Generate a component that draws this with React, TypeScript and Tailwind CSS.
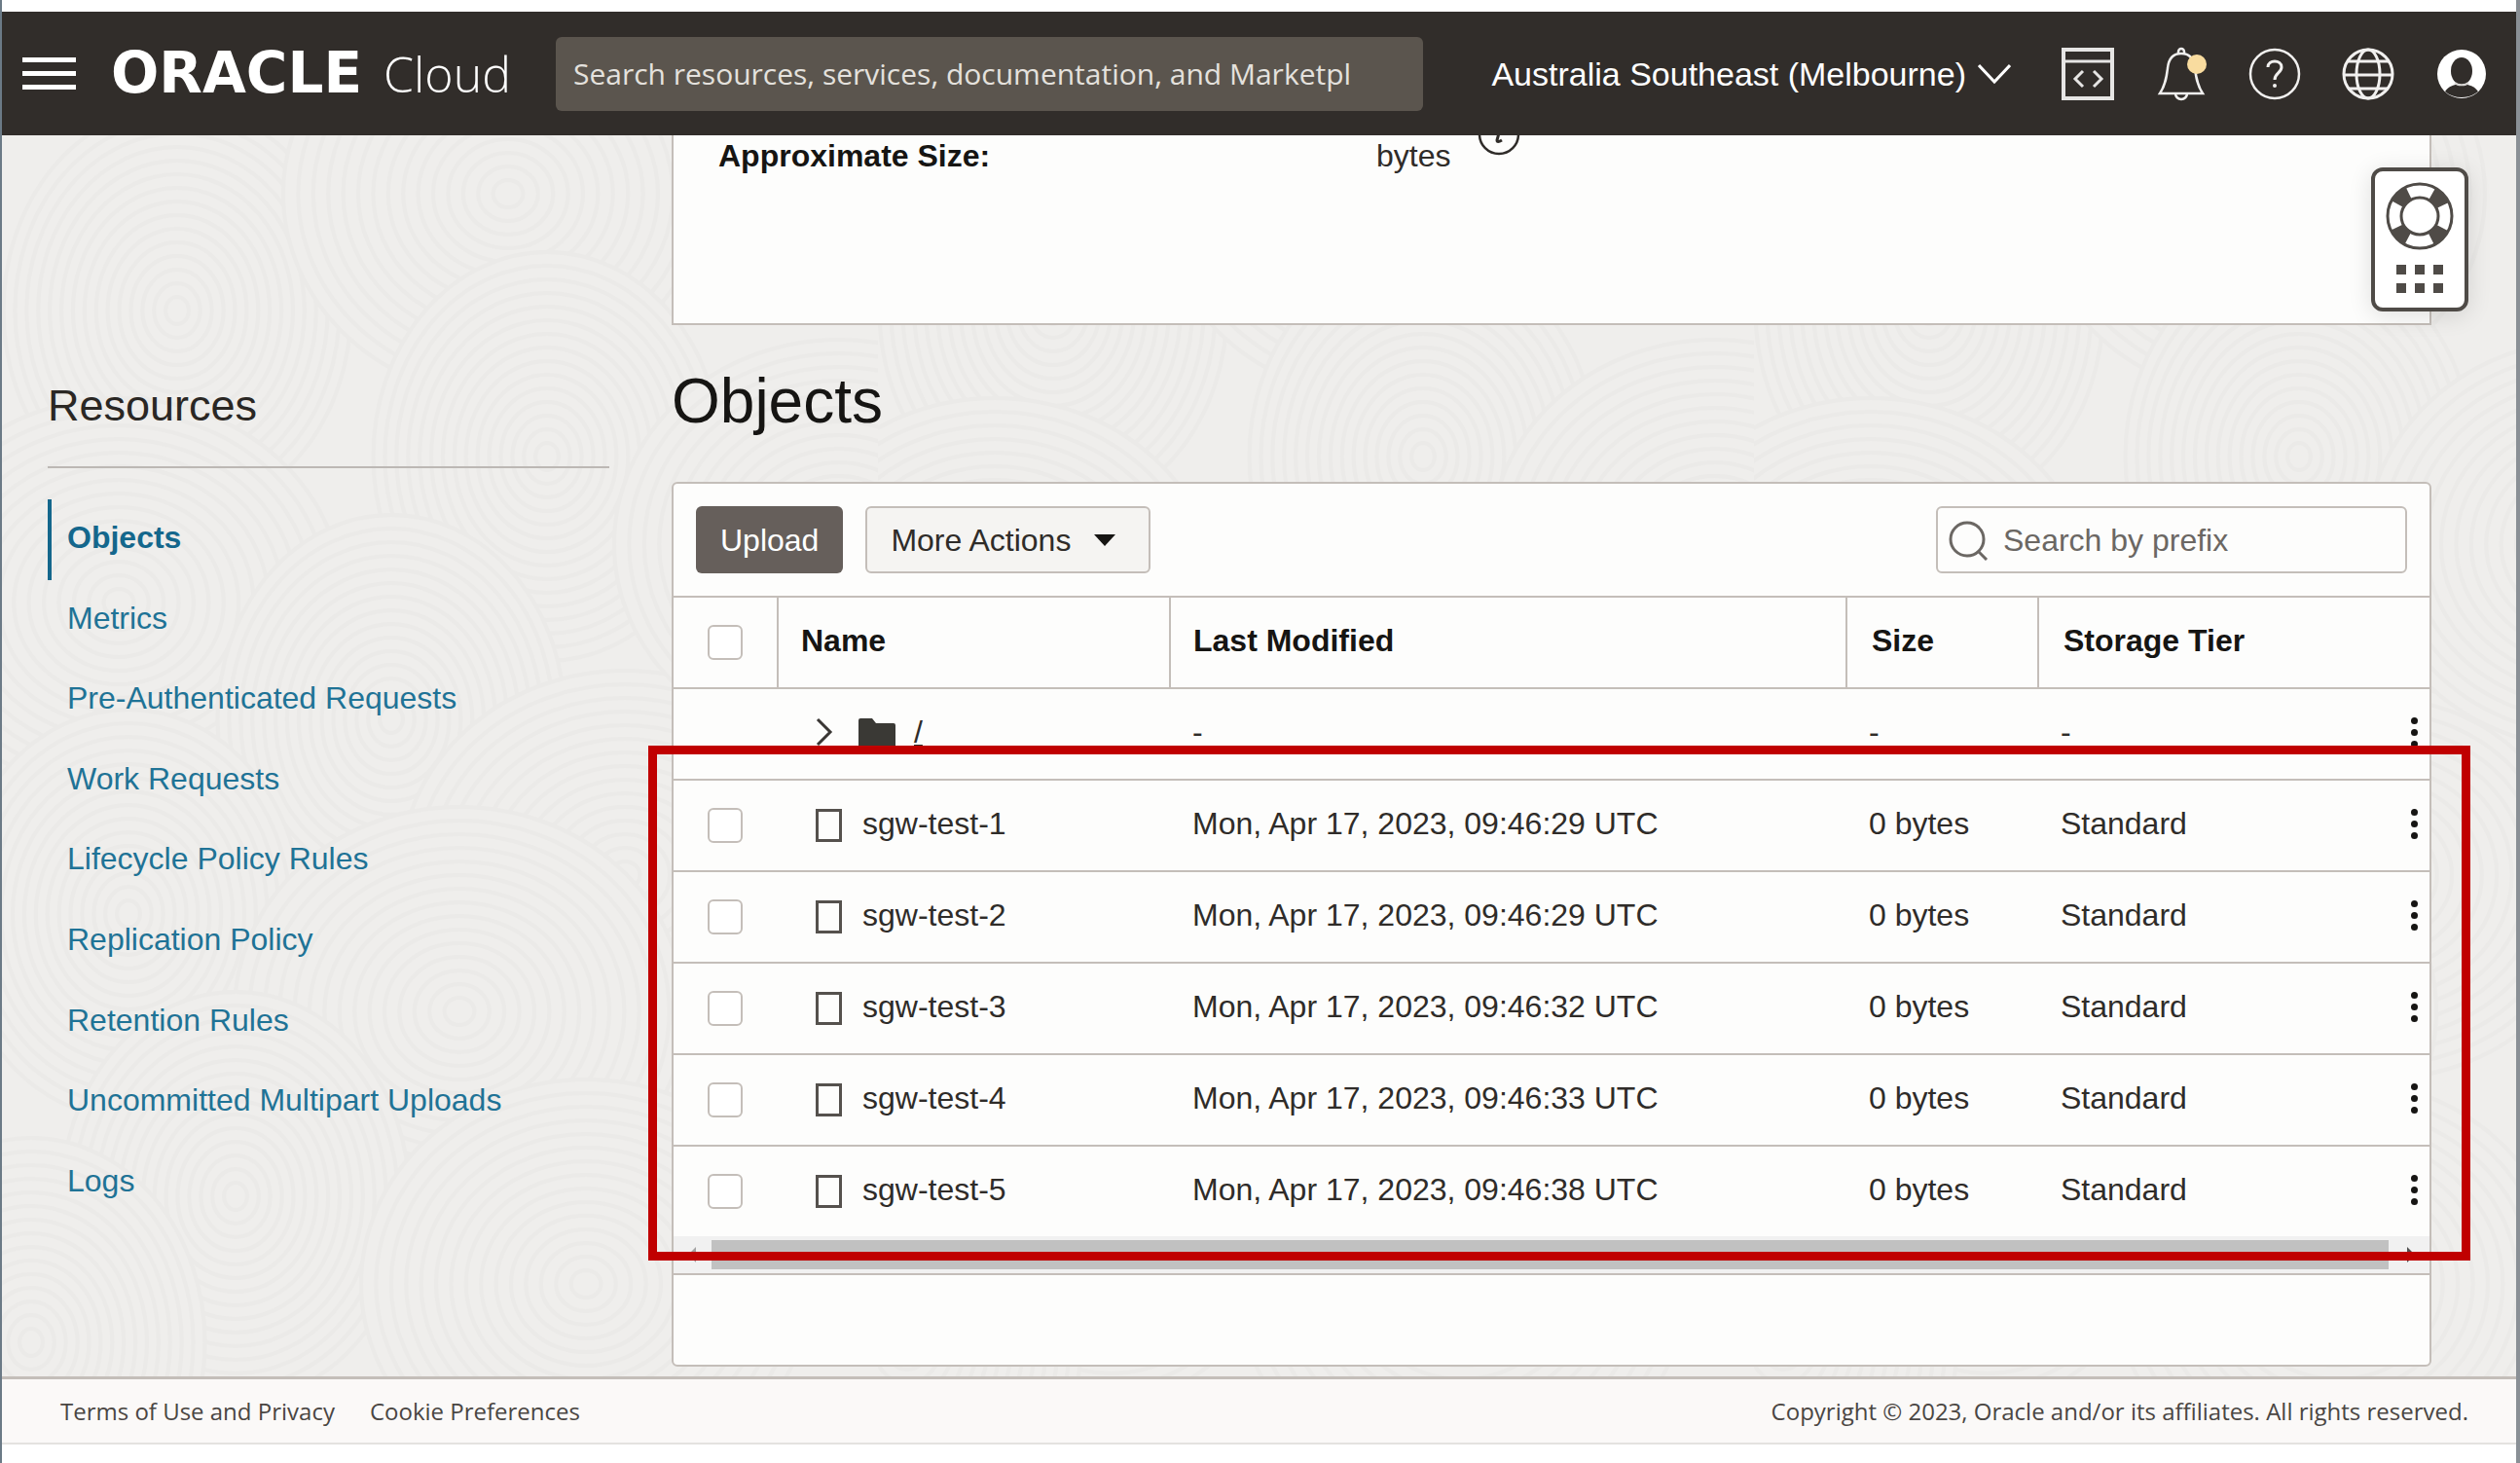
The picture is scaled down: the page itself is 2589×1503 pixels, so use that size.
import React from "react";

const resources = [
  "Objects",
  "Metrics",
  "Pre-Authenticated Requests",
  "Work Requests",
  "Lifecycle Policy Rules",
  "Replication Policy",
  "Retention Rules",
  "Uncommitted Multipart Uploads",
  "Logs",
];

const objects = [
  { name: "sgw-test-1", modified: "Mon, Apr 17, 2023, 09:46:29 UTC" },
  { name: "sgw-test-2", modified: "Mon, Apr 17, 2023, 09:46:29 UTC" },
  { name: "sgw-test-3", modified: "Mon, Apr 17, 2023, 09:46:32 UTC" },
  { name: "sgw-test-4", modified: "Mon, Apr 17, 2023, 09:46:33 UTC" },
  { name: "sgw-test-5", modified: "Mon, Apr 17, 2023, 09:46:38 UTC" },
];

const rippleCentres = [
  [180, 180], [520, 60], [560, 330], [120, 480], [400, 600], [640, 760],
  [130, 800], [470, 900], [240, 1090], [600, 1180], [30, 1240], [860, 420],
];
const rippleRadii = [210, 196, 182, 168, 154, 140, 126, 112, 98, 84, 70, 56, 42, 28, 14];

/* Faint overlapping tree-ring texture behind the page. */
function Ripples() {
  return (
    <svg className="absolute inset-0 h-full w-full" aria-hidden="true">
      <defs>
        <pattern id="ripples" width="900" height="1300" patternUnits="userSpaceOnUse">
          <rect width="900" height="1300" fill="#efeeec" />
          {rippleCentres.map(([x, y], i) => (
            <g key={i} fill="#efeeec" stroke="#ebeae8" strokeWidth="4">
              {rippleRadii.map((r) => (
                <ellipse key={r} cx={x} cy={y} rx={r * (i % 2 ? 1.1 : 0.85)} ry={r} />
              ))}
            </g>
          ))}
        </pattern>
      </defs>
      <rect width="100%" height="100%" fill="url(#ripples)" />
    </svg>
  );
}

function IconButton({ label, children }: { label: string; children: React.ReactNode }) {
  return (
    <button type="button" aria-label={label} className="flex size-14 shrink-0 items-center justify-center">
      {children}
    </button>
  );
}

function Header() {
  return (
    <header className="flex h-[127px] items-center bg-[#312d2a] pr-[28px] pl-[21px] text-white">
      <button type="button" aria-label="Open navigation menu" className="flex w-[55px] shrink-0 flex-col gap-[9px]">
        <span className="h-[5px] bg-white" />
        <span className="h-[5px] bg-white" />
        <span className="h-[5px] bg-white" />
      </button>
      <a href="#home" className="ml-[36px] flex shrink-0 items-baseline gap-[22px] leading-[60px]">
        <span className="font-['DejaVu_Sans'] text-[58px] font-bold">ORACLE</span>
        <span className="font-['Open_Sans'] text-[50px] font-light">Cloud</span>
      </a>
      <input
        type="text"
        aria-label="Search"
        placeholder="Search resources, services, documentation, and Marketpl"
        className="ml-[46px] h-[76px] min-w-0 flex-1 rounded-[6px] bg-[#5b554e] px-[18px] font-['Open_Sans'] text-[30px] text-white outline-none placeholder:text-[#e4e1dd]"
      />
      <button type="button" className="ml-[70px] flex shrink-0 items-center gap-[12px] font-['Liberation_Sans'] text-[34px]">
        Australia Southeast (Melbourne)
        <svg width="34" height="24" viewBox="0 0 34 24" fill="none" stroke="white" strokeWidth="3">
          <path d="M1 3 L17 20 L33 3" />
        </svg>
      </button>
      <div className="ml-[51px] flex shrink-0 gap-[40px]">
        <IconButton label="Developer tools">
          <svg width="54" height="54" viewBox="0 0 54 54" fill="none" stroke="#e6e5e4" strokeWidth="3">
            <rect x="2" y="2" width="50" height="50" strokeWidth="4" />
            <path d="M2 14H52M22 24L14 32L22 40M33 24L41 32L33 40" />
          </svg>
        </IconButton>
        <IconButton label="Announcements">
          <svg width="54" height="56" viewBox="0 0 54 56" fill="none" stroke="#f1f0ef" strokeWidth="2.5">
            <path d="M24 7V5A3 3 0 0 1 30 5V7" />
            <path d="M5 48C11 39 12 30 13 22C14 12 18 7 27 7C36 7 40 12 41 22C42 30 43 39 49 48Z" />
            <path d="M21 48A6 6 0 0 0 33 48" />
            <circle cx="43" cy="18" r="10" fill="#f9dc9f" stroke="none" />
          </svg>
        </IconButton>
        <IconButton label="Help">
          <svg width="54" height="54" viewBox="0 0 54 54" fill="none" stroke="#f1f0ef" strokeWidth="2.5">
            <circle cx="27" cy="27" r="25" />
            <path d="M20 20C20 12 34 12 34 20C34 26 27 26 27 33" strokeWidth="3" />
            <circle cx="27" cy="39" r="2" fill="#f1f0ef" stroke="none" />
          </svg>
        </IconButton>
        <IconButton label="Language">
          <svg width="54" height="54" viewBox="0 0 54 54" fill="none" stroke="#f1f0ef" strokeWidth="3">
            <circle cx="27" cy="27" r="25" />
            <ellipse cx="27" cy="27" rx="12" ry="25" />
            <path d="M2 28H52M6 14H48M6 42H48" />
          </svg>
        </IconButton>
        <IconButton label="Profile">
          <svg width="52" height="52" viewBox="0 0 52 52">
            <circle cx="26" cy="26" r="25" fill="white" />
            <ellipse cx="26" cy="23" rx="11" ry="14" fill="#312d2a" />
            <path d="M9 44C13 38 18 38 22 36H30C34 38 39 38 43 44C34 52 18 52 9 44Z" fill="#312d2a" />
            <path d="M19 35C22 38 30 38 33 35" fill="none" stroke="#d8d6d4" strokeWidth="2" />
          </svg>
        </IconButton>
      </div>
    </header>
  );
}

function Sidebar() {
  return (
    <aside className="w-[577px] shrink-0 pt-[254px]">
      <h2 className="border-b-2 border-[#bcb8b4] pb-[38px] text-[45px] leading-[48px] text-[#2a2724]">Resources</h2>
      <nav aria-label="Resources" className="mt-8 grid h-[743px] grid-rows-9">
        {resources.map((item, i) => (
          <a
            key={item}
            href="#resource"
            className={
              i === 0
                ? "flex items-center border-l-4 border-[#14678c] pb-1 pl-[16px] font-bold text-[#14678c]"
                : "flex items-center pb-1 pl-[20px] text-[#1f7396]"
            }
          >
            {item}
          </a>
        ))}
      </nav>
    </aside>
  );
}

function Check({ label }: { label: string }) {
  return (
    <input
      type="checkbox"
      aria-label={label}
      className="ml-[35px] block size-9 appearance-none rounded-[6px] border-2 border-[#c4beb9] bg-white"
    />
  );
}

function RowMenu({ label }: { label: string }) {
  return (
    <button type="button" aria-label={label} className="flex w-[30px] flex-col items-center gap-[5px]">
      <span className="size-[7px] rounded-full bg-[#161513]" />
      <span className="size-[7px] rounded-full bg-[#161513]" />
      <span className="size-[7px] rounded-full bg-[#161513]" />
    </button>
  );
}

const head = "border-b-2 border-[#c4beb9] p-0 pb-1 text-left font-bold text-[#161513]";
const cell = "border-b-2 border-[#c4beb9] p-0 pb-1";
const lastCell = "p-0 pb-1";

function ObjectsPanel() {
  return (
    <section className="relative rounded-[6px] border-2 border-[#c4beb9] bg-[#fdfdfc]">
      <div className="flex h-[117px] items-start border-b-2 border-[#c4beb9] px-[23px] pt-[23px]">
        <button type="button" className="h-[69px] rounded-[6px] bg-[#665f5b] px-[25px] text-white">
          Upload
        </button>
        <button
          type="button"
          className="ml-[23px] flex h-[69px] items-center rounded-[6px] border-2 border-[#c4beb9] bg-[#f5f4f2] pr-[34px] pl-[24px]"
        >
          More Actions
          <svg className="ml-[24px]" width="22" height="12" viewBox="0 0 22 12">
            <path d="M0 0H22L11 12Z" fill="#161513" />
          </svg>
        </button>
        <label className="ml-auto flex h-[69px] w-[484px] items-center rounded-[6px] border-2 border-[#c4beb9] bg-[#fdfdfc] pl-[10px]">
          <svg width="42" height="42" viewBox="0 0 42 42" fill="none" stroke="#6b6763" strokeWidth="3">
            <circle cx="20" cy="20" r="17" />
            <path d="M31 32L40 41" />
          </svg>
          <input
            type="text"
            aria-label="Search by prefix"
            placeholder="Search by prefix"
            className="ml-[15px] min-w-0 flex-1 bg-transparent outline-none placeholder:text-[#6b6763]"
          />
        </label>
      </div>

      <table className="w-full table-fixed border-separate border-spacing-0">
        <colgroup>
          <col className="w-[108px]" />
          <col className="w-[403px]" />
          <col />
          <col className="w-[197px]" />
          <col className="w-[371px]" />
          <col className="w-[30px]" />
        </colgroup>
        <thead>
          <tr className="h-[94px]">
            <th className="border-r-2 border-b-2 border-[#c4beb9] p-0">
              <Check label="Select all objects" />
            </th>
            <th className={head + " border-r-2 pl-[23px]"}>Name</th>
            <th className={head + " border-r-2 pl-[23px]"}>Last Modified</th>
            <th className={head + " border-r-2 pl-[25px]"}>Size</th>
            <th className={head + " pl-[25px]"} colSpan={2}>Storage Tier</th>
          </tr>
        </thead>
        <tbody>
          <tr className="h-[94px]">
            <td className={cell} />
            <td className={cell}>
              <div className="flex items-center pl-[38px]">
                <button type="button" aria-label="Expand folder">
                  <svg width="18" height="30" viewBox="0 0 18 30" fill="none" stroke="#3a3734" strokeWidth="3">
                    <path d="M2 2L15 15L2 28" />
                  </svg>
                </button>
                <svg className="mt-1 ml-[26px]" width="38" height="32" viewBox="0 0 38 32">
                  <path d="M0 2Q0 0 2 0H14L18 5H36Q38 5 38 7V30Q38 32 36 32H2Q0 32 0 30Z" fill="#3a3935" />
                </svg>
                <a href="#root-folder" className="ml-[19px] underline">/</a>
              </div>
            </td>
            <td className={cell + " pl-[22px]"}>-</td>
            <td className={cell + " pl-[22px]"}>-</td>
            <td className={cell + " pl-[22px]"}>-</td>
            <td className={cell}>
              <RowMenu label="Actions for folder /" />
            </td>
          </tr>
          {objects.map((o, i) => {
            const last = i === objects.length - 1;
            const c = last ? lastCell : cell;
            return (
              <tr key={o.name} className={last ? "h-[92px]" : "h-[94px]"}>
                <td className={last ? "p-0" : "border-b-2 border-[#c4beb9] p-0"}>
                  <Check label={"Select " + o.name} />
                </td>
                <td className={c}>
                  <div className="flex items-center pl-[38px]">
                    <span className="mt-1 h-[34px] w-[27px] border-[3px] border-[#55514d]" />
                    <span className="ml-[21px]">{o.name}</span>
                  </div>
                </td>
                <td className={c + " pl-[22px]"}>{o.modified}</td>
                <td className={c + " pl-[22px]"}>0 bytes</td>
                <td className={c + " pl-[22px]"}>Standard</td>
                <td className={c}>
                  <RowMenu label={"Actions for " + o.name} />
                </td>
              </tr>
            );
          })}
        </tbody>
      </table>

      <div className="flex h-[40px] items-center border-b-2 border-[#c4beb9] bg-[#f1f1f1]">
        <svg className="mr-[16px] ml-[15px]" width="8" height="16" viewBox="0 0 8 16">
          <path d="M8 0V16L0 8Z" fill="#a3a3a3" />
        </svg>
        <div className="h-[30px] flex-1 bg-[#c1c1c1]" />
        <svg className="mr-[15px] ml-[19px]" width="8" height="16" viewBox="0 0 8 16">
          <path d="M0 0V16L8 8Z" fill="#505050" />
        </svg>
      </div>
      <div className="h-[92px]" />

      {/* Highlight frame laid over the listed objects */}
      <div className="pointer-events-none absolute top-[269px] -right-[42px] bottom-[107px] -left-[26px] border-[9px] border-[#c00000]" />
    </section>
  );
}

function PageScrollbar() {
  return (
    <div className="flex w-[38px] shrink-0 flex-col items-center bg-[#f1f1f1]">
      <div className="flex h-[42px] items-center">
        <svg width="18" height="10" viewBox="0 0 18 10"><path d="M0 10H18L9 0Z" fill="#505050" /></svg>
      </div>
      <div className="flex-[641]" />
      <div className="w-[30px] flex-[537] bg-[#c1c1c1]" />
      <div className="flex-[13]" />
      <div className="flex h-[42px] items-center">
        <svg width="18" height="10" viewBox="0 0 18 10"><path d="M0 0H18L9 10Z" fill="#505050" /></svg>
      </div>
    </div>
  );
}

function HelpWidget() {
  return (
    <button
      type="button"
      aria-label="Help and support"
      className="absolute top-[33px] right-[49px] flex h-[148px] w-[100px] flex-col items-center rounded-[12px] border-4 border-[#4f4b47] bg-white pt-[11px] shadow-[0_4px_24px_rgba(0,0,0,0.12)]"
    >
      <svg width="70" height="70" viewBox="0 0 70 70" fill="none" stroke="#4f4b47">
        <circle cx="35" cy="35" r="26" strokeWidth="15" strokeDasharray="16 24.84" strokeDashoffset="-12.4" />
        <circle cx="35" cy="35" r="33" strokeWidth="3" />
        <circle cx="35" cy="35" r="19" strokeWidth="3" />
      </svg>
      <span className="mt-[15px] grid grid-cols-3 gap-[9px]">
        {[0, 1, 2, 3, 4, 5].map((n) => (
          <span key={n} className="size-[10px] bg-[#4f4b47]" />
        ))}
      </span>
    </button>
  );
}

export default function App() {
  return (
    <div className="flex min-h-screen flex-col border-r-4 border-l-2 border-r-[#8a9096] border-l-[#6b7a86] bg-white pt-3 font-['Liberation_Sans',sans-serif] text-[32px] leading-[36px] text-[#2f2c29]">
      <Header />
      <div className="relative flex flex-1 overflow-hidden bg-[#f0efed]">
        <Ripples />
        <div className="relative flex min-w-0 flex-1 gap-[64px] pr-[49px] pb-[9px] pl-[47px]">
          <Sidebar />
          <main className="min-w-0 flex-1">
            <div className="relative flex h-[195px] overflow-hidden border-x-2 border-b-2 border-[#c4beb9] bg-[#fdfdfc] pt-[3px] pl-[46px]">
              <span className="w-[676px] font-bold text-[#161513]">Approximate Size:</span>
              <span>bytes</span>
              <svg className="-mt-[26px] ml-[28px]" width="44" height="44" viewBox="0 0 44 44" fill="none" stroke="#2f2c29" strokeWidth="2.5">
                <circle cx="22" cy="22" r="20" />
                <path d="M19 17H23L20 28Q20 31 25 28" strokeWidth="3" />
              </svg>
            </div>
            <h1 className="pt-[46px] pb-[51px] text-[64px] leading-[64px] text-[#161513]">Objects</h1>
            <ObjectsPanel />
          </main>
        </div>
        <PageScrollbar />
        <HelpWidget />
      </div>
      <footer className="mb-[19px] flex h-[70px] items-center border-t-[3px] border-b-2 border-t-[#c4beb9] border-b-[#e4e2e0] bg-[#fbf9f8] pr-[49px] pl-[60px] font-['Open_Sans'] text-[24px] text-[#4a4643]">
        <a href="#terms">Terms of Use and Privacy</a>
        <a href="#cookies" className="ml-[36px]">Cookie Preferences</a>
        <span className="ml-auto">Copyright © 2023, Oracle and/or its affiliates. All rights reserved.</span>
      </footer>
    </div>
  );
}
